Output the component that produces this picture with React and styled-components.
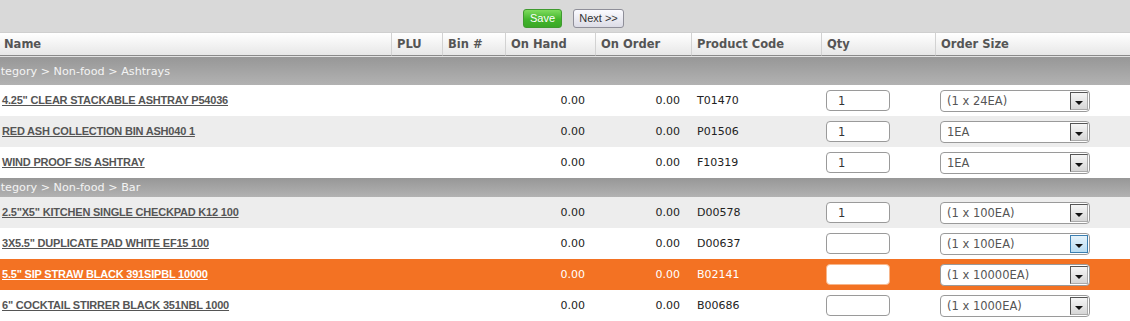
import React from 'react';
import styled, { createGlobalStyle, css } from 'styled-components';

const Global = createGlobalStyle`
  html, body { margin: 0; padding: 0; background: #fff; overflow: hidden; }
  body { font-family: "DejaVu Sans", Verdana, sans-serif; }
`;

const Page = styled.div`
  width: 1130px;
  height: 321px;
  overflow: hidden;
`;

const Toolbar = styled.div`
  height: 32px;
  box-sizing: border-box;
  background: #d9d9d9;
  display: flex;
  justify-content: center;
  align-items: flex-start;
  gap: 11px;
  padding: 9px 0 0 17px;
`;

const Button = styled.button`
  width: ${(p) => p.$w}px;
  height: 19px;
  box-sizing: border-box;
  padding: 0;
  text-align: center;
  border-radius: 3px;
  font-family: "Liberation Sans", Arial, sans-serif;
  font-size: 11px;
  line-height: 17px;
  cursor: pointer;
  ${(p) =>
    p.$primary
      ? css`
          color: #fff;
          border: 1px solid #3f9a2f;
          background: linear-gradient(#7fdc5e, #42b52c 55%, #3aa826);
        `
      : css`
          color: #333;
          border: 1px solid #8f8f99;
          background: linear-gradient(#fbfbff, #dcdce6);
        `}
`;

const Grid = styled.table`
  width: 1130px;
  border-collapse: separate;
  border-spacing: 0;
  table-layout: fixed;
`;

const HeadCell = styled.th`
  box-sizing: border-box;
  width: ${(p) => p.$w}px;
  height: 24px;
  padding: 0 0 0 ${(p) => (p.$first ? 4 : 5)}px;
  text-align: left;
  font-family: "DejaVu Sans", Verdana, sans-serif;
  font-weight: bold;
  font-size: 11.5px;
  color: #555;
  white-space: nowrap;
  background: linear-gradient(#ffffff, #e7e7e7);
  border-top: 1px solid #cfcfcf;
  border-bottom: 1px solid #8a8a8a;
  border-left: ${(p) => (p.$first ? 'none' : '1px solid #d2d2d2')};
`;

const CategoryCell = styled.td`
  height: ${(p) => (p.$tall ? 28 : 19)}px;
  padding: 0;
  border-top: ${(p) => (p.$tall ? '1px solid #e2e2e2' : 'none')};
  background: linear-gradient(#979797, #b2b2b2);
  color: #f4f4f4;
  font-size: 11.2px;
  white-space: nowrap;
  overflow: hidden;
  text-indent: -14px;
`;

const Row = styled.tr`
  background: ${(p) => (p.$active ? '#f37223' : p.$alt ? '#ededed' : '#ffffff')};
  color: ${(p) => (p.$active ? '#ffffff' : '#222')};
`;

const Cell = styled.td`
  height: 31px;
  padding: 0;
  font-size: 11px;
  white-space: nowrap;
  vertical-align: middle;
`;

const NameCell = styled(Cell)`
  padding-left: 2px;
`;

const NameLink = styled.a`
  font-family: "Liberation Sans", Arial, sans-serif;
  font-weight: bold;
  font-size: 11px;
  letter-spacing: -0.2px;
  text-transform: uppercase;
  text-decoration: underline;
  color: ${(p) => (p.$active ? '#fff' : '#555')};
  cursor: pointer;
`;

const NumCell = styled(Cell)`
  text-align: right;
  padding-right: ${(p) => p.$pr}px;
`;

const CodeCell = styled(Cell)`
  padding-left: 6px;
`;

const QtyCell = styled(Cell)`
  padding-left: 5px;
`;

const QtyInput = styled.input`
  display: block;
  box-sizing: border-box;
  width: 64px;
  height: 21px;
  margin: 0;
  padding: 0 0 0 11px;
  border: 1px solid ${(p) => (p.$active ? '#f7b58a' : '#9a9a9a')};
  border-radius: 4px;
  background: #fff;
  font-family: "DejaVu Sans", Verdana, sans-serif;
  font-size: 11.5px;
  color: #333;
  outline: none;
`;

const SizeCell = styled(Cell)`
  padding-left: 5px;
`;

const SizeSelect = styled.div`
  box-sizing: border-box;
  width: 150px;
  height: 22px;
  border: 1px solid #9a9a9a;
  border-radius: 4px;
  background: #fff;
  display: flex;
  align-items: center;
  justify-content: space-between;
  padding: 0 1px 0 6px;
  font-size: 11.5px;
  color: #555;
`;

const DropButton = styled.span`
  box-sizing: border-box;
  width: 18px;
  height: 18px;
  display: flex;
  align-items: flex-end;
  justify-content: center;
  padding-bottom: 4px;
  border: 1px solid ${(p) => (p.$focus ? '#3c7fb1' : '#555')};
  border-right-color: ${(p) => (p.$focus ? '#3c7fb1' : '#aaa')};
  border-bottom-color: ${(p) => (p.$focus ? '#3c7fb1' : '#aaa')};
  background: ${(p) =>
    p.$focus ? 'linear-gradient(#e6f3fb, #b9ddf3)' : 'linear-gradient(#f6f6f6, #d6d6d6)'};
`;

const Arrow = styled.span`
  width: 0;
  height: 0;
  border-left: 4px solid transparent;
  border-right: 4px solid transparent;
  border-top: 4px solid #111;
`;

const columns = [
  ['Name', 391],
  ['PLU', 51],
  ['Bin #', 63],
  ['On Hand', 90],
  ['On Order', 96],
  ['Product Code', 130],
  ['Qty', 114],
  ['Order Size', 195],
];

const groups = [
  {
    category: 'Category > Non-food > Ashtrays',
    items: [
      { name: '4.25" CLEAR STACKABLE ASHTRAY P54036', code: 'T01470', qty: '1', size: '(1 x 24EA)' },
      { name: 'RED ASH COLLECTION BIN ASH040 1', code: 'P01506', qty: '1', size: '1EA' },
      { name: 'WIND PROOF S/S ASHTRAY', code: 'F10319', qty: '1', size: '1EA' },
    ],
  },
  {
    category: 'Category > Non-food > Bar',
    items: [
      { name: '2.5"X5" KITCHEN SINGLE CHECKPAD K12 100', code: 'D00578', qty: '1', size: '(1 x 100EA)' },
      { name: '3X5.5" DUPLICATE PAD WHITE EF15 100', code: 'D00637', qty: '', size: '(1 x 100EA)', focus: true },
      { name: '5.5" SIP STRAW BLACK 391SIPBL 10000', code: 'B02141', qty: '', size: '(1 x 10000EA)', active: true },
      { name: '6" COCKTAIL STIRRER BLACK 351NBL 1000', code: 'B00686', qty: '', size: '(1 x 1000EA)' },
    ],
  },
];

function ItemRow({ item, alt }) {
  return (
    <Row $alt={alt} $active={item.active}>
      <NameCell>
        <NameLink $active={item.active}>{item.name}</NameLink>
      </NameCell>
      <Cell />
      <Cell />
      <NumCell $pr={10}>0.00</NumCell>
      <NumCell $pr={11}>0.00</NumCell>
      <CodeCell>{item.code}</CodeCell>
      <QtyCell>
        <QtyInput $active={item.active} defaultValue={item.qty} />
      </QtyCell>
      <SizeCell>
        <SizeSelect>
          <span>{item.size}</span>
          <DropButton $focus={item.focus}>
            <Arrow />
          </DropButton>
        </SizeSelect>
      </SizeCell>
    </Row>
  );
}

export default function App() {
  let rowIndex = 0;
  return (
    <Page>
      <Global />
      <Toolbar>
        <Button $primary $w={39}>Save</Button>
        <Button $w={51}>Next &gt;&gt;</Button>
      </Toolbar>
      <Grid>
        <thead>
          <tr>
            {columns.map(([label, w], i) => (
              <HeadCell key={label} $w={w} $first={i === 0}>
                {label}
              </HeadCell>
            ))}
          </tr>
        </thead>
        <tbody>
          {groups.map((g, gi) => (
            <React.Fragment key={g.category}>
              <tr>
                <CategoryCell colSpan={8} $tall={gi === 0}>
                  {g.category}
                </CategoryCell>
              </tr>
              {g.items.map((item) => {
                const alt = rowIndex % 2 === 1;
                rowIndex += 1;
                return <ItemRow key={item.code} item={item} alt={alt} />;
              })}
            </React.Fragment>
          ))}
        </tbody>
      </Grid>
    </Page>
  );
}
